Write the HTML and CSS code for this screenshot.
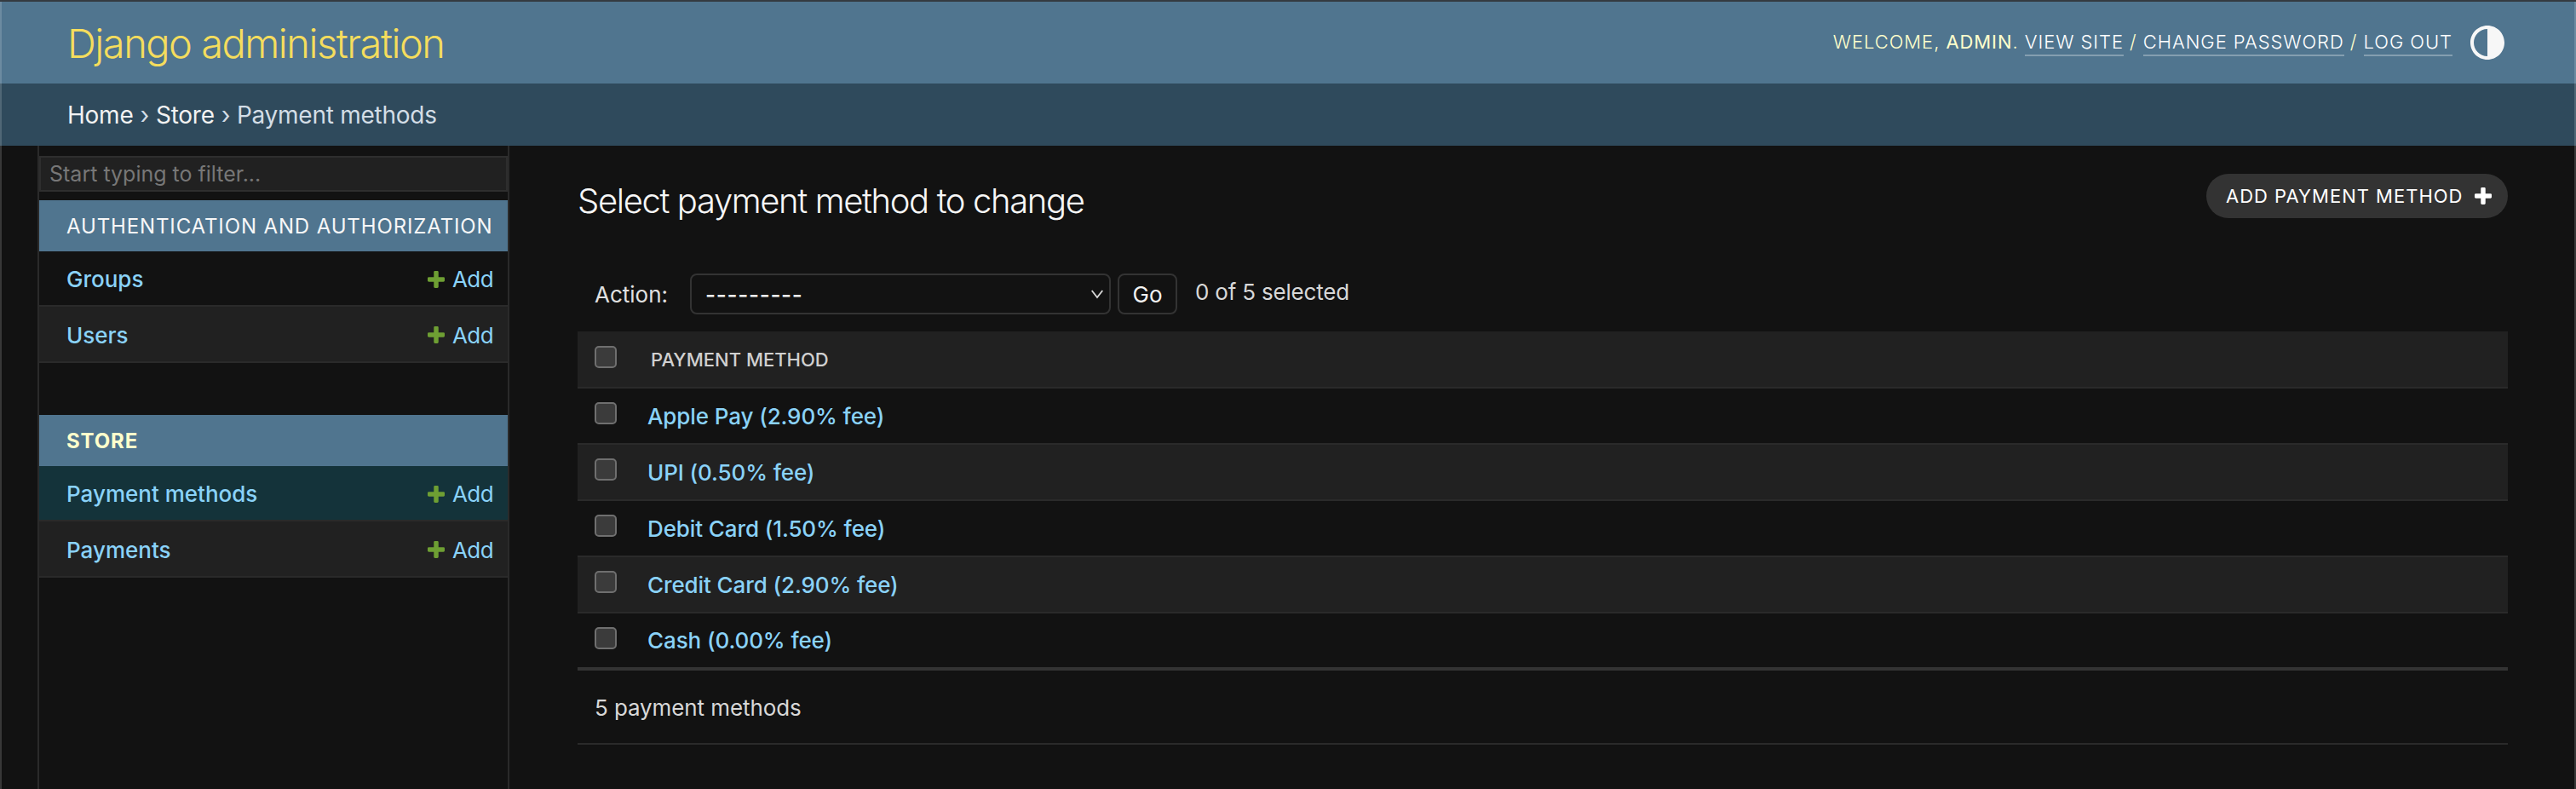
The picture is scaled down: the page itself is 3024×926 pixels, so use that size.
FILE: index.html
```html
<!DOCTYPE html>
<html lang="en">
<head>
    <meta charset="UTF-8">
    <title>Select payment method to change | Django site admin</title>
    <link rel="stylesheet" href="styles.css">
</head>
<body>
    <div id="header" class="edged">
        <h1 id="site-name">Django administration</h1>
        <div id="user-tools">
            <div class="user-links">
                <span class="welcome">Welcome, <strong>admin</strong>.</span>
                <a href="#">View site</a> /
                <a href="#">Change password</a> /
                <a href="#">Log out</a>
            </div>
            <svg class="theme-icon" viewBox="0 0 24 24"><path d="M12 22C6.477 22 2 17.523 2 12S6.477 2 12 2s10 4.477 10 10-4.477 10-10 10zm0-2V4a8 8 0 1 0 0 16z"/></svg>
        </div>
    </div>
    <div class="breadcrumbs edged"><a href="#">Home</a> › <a href="#">Store</a> › Payment methods</div>

    <div id="main" class="edged">
        <div class="sidebar-toggle"></div>
        <div id="nav-sidebar">
            <input type="text" id="nav-filter" placeholder="Start typing to filter...">

            <div class="app-module">
                <div class="caption">Authentication and Authorization</div>
                <div class="nav-row"><a href="#">Groups</a><a class="addlink" href="#"><svg class="plus" viewBox="192 192 1408 1408"><path d="M1600 796v192q0 40-28 68t-68 28h-416v416q0 40-28 68t-68 28h-192q-40 0-68-28t-28-68v-416h-416q-40 0-68-28t-28-68v-192q0-40 28-68t68-28h416v-416q0-40 28-68t68-28h192q40 0 68 28t28 68v416h416q40 0 68 28t28 68z"/></svg>Add</a></div>
                <div class="nav-row alt"><a href="#">Users</a><a class="addlink" href="#"><svg class="plus" viewBox="192 192 1408 1408"><path d="M1600 796v192q0 40-28 68t-68 28h-416v416q0 40-28 68t-68 28h-192q-40 0-68-28t-28-68v-416h-416q-40 0-68-28t-28-68v-192q0-40 28-68t68-28h416v-416q0-40 28-68t68-28h192q40 0 68 28t28 68v416h416q40 0 68 28t28 68z"/></svg>Add</a></div>
            </div>

            <div class="app-module">
                <div class="caption current-app">Store</div>
                <div class="nav-row current"><a href="#">Payment methods</a><a class="addlink" href="#"><svg class="plus" viewBox="192 192 1408 1408"><path d="M1600 796v192q0 40-28 68t-68 28h-416v416q0 40-28 68t-68 28h-192q-40 0-68-28t-28-68v-416h-416q-40 0-68-28t-28-68v-192q0-40 28-68t68-28h416v-416q0-40 28-68t68-28h192q40 0 68 28t28 68v416h416q40 0 68 28t28 68z"/></svg>Add</a></div>
                <div class="nav-row alt"><a href="#">Payments</a><a class="addlink" href="#"><svg class="plus" viewBox="192 192 1408 1408"><path d="M1600 796v192q0 40-28 68t-68 28h-416v416q0 40-28 68t-68 28h-192q-40 0-68-28t-28-68v-416h-416q-40 0-68-28t-28-68v-192q0-40 28-68t68-28h416v-416q0-40 28-68t68-28h192q40 0 68 28t28 68v416h416q40 0 68 28t28 68z"/></svg>Add</a></div>
            </div>
        </div>

        <div id="content">
            <div class="title-row">
                <h2>Select payment method to change</h2>
                <a class="add-button" href="#">Add payment method<svg class="plus-white" viewBox="192 192 1408 1408"><path d="M1600 796v192q0 40-28 68t-68 28h-416v416q0 40-28 68t-68 28h-192q-40 0-68-28t-28-68v-416h-416q-40 0-68-28t-28-68v-192q0-40 28-68t68-28h416v-416q0-40 28-68t68-28h192q40 0 68 28t28 68v416h416q40 0 68 28t28 68z"/></svg></a>
            </div>

            <div class="actions">
                <label for="action">Action:</label>
                <div class="select-box" id="action">
                    <span class="select-value">---------</span>
                    <svg class="chevron" viewBox="0 0 14 10"><path d="M1.5 1.5 7 8.5l5.5-7"/></svg>
                </div>
                <button class="go-button" type="button">Go</button>
                <span class="counter">0 of 5 selected</span>
            </div>

            <table id="result-list">
                <thead>
                    <tr>
                        <th class="check-col"><span class="checkbox"></span></th>
                        <th class="name-head">Payment method</th>
                    </tr>
                </thead>
                <tbody>
                    <tr><td class="check-col"><span class="checkbox"></span></td><td><a href="#">Apple Pay (2.90% fee)</a></td></tr>
                    <tr class="alt"><td class="check-col"><span class="checkbox"></span></td><td><a href="#">UPI (0.50% fee)</a></td></tr>
                    <tr><td class="check-col"><span class="checkbox"></span></td><td><a href="#">Debit Card (1.50% fee)</a></td></tr>
                    <tr class="alt"><td class="check-col"><span class="checkbox"></span></td><td><a href="#">Credit Card (2.90% fee)</a></td></tr>
                    <tr><td class="check-col"><span class="checkbox"></span></td><td><a href="#">Cash (0.00% fee)</a></td></tr>
                </tbody>
            </table>

            <p class="paginator">5 payment methods</p>
        </div>
    </div>
</body>
</html>
```

FILE: styles.css
```css
html, body {
    height: 100%;
}

body {
    margin: 0;
    box-sizing: border-box;
    display: flex;
    flex-direction: column;
    border-top: 2px solid #343a40;
    background-color: #121212;
    color: #eeeeee;
    font-family: Inter, "Noto Sans", sans-serif;
    font-size: 26px;
    overflow: hidden;
}

a {
    color: #8ad2f8;
    text-decoration: none;
}

/* Thin window edge down both sides, shows through on each band */
.edged {
    border-left: 2px solid rgba(255, 255, 255, 0.16);
    border-right: 2px solid rgba(255, 255, 255, 0.16);
}

/* Header */
#header {
    display: flex;
    align-items: center;
    justify-content: space-between;
    flex: none;
    height: 96px;
    padding: 0 78px 0 77px;
    background-color: #50758f;
    color: #ffffcc;
}

#site-name {
    margin: 0;
    color: #f5dd5d;
    font-size: 47px;
    font-weight: 300;
    letter-spacing: -1.5px;
}

#user-tools {
    display: flex;
    align-items: center;
    font-size: 22px;
    font-weight: 300;
    letter-spacing: 0.93px;
    text-transform: uppercase;
}

.user-links {
    margin-top: -2px;
}

#user-tools strong {
    font-weight: 400;
}

#user-tools a {
    padding-bottom: 2px;
    color: #ffffff;
    border-bottom: 2px solid rgba(255, 255, 255, 0.3);
}

.theme-icon {
    width: 48px;
    height: 48px;
    margin-left: 17px;
    fill: #f7f7f7;
}

.breadcrumbs {
    display: flex;
    align-items: center;
    flex: none;
    gap: 8px;
    height: 73px;
    padding-left: 77px;
    background-color: #2f4a5c;
    color: #d3dde6;
    font-size: 28px;
    letter-spacing: -0.25px;
}

.breadcrumbs a {
    color: #f2f2f2;
}

/* Sidebar */
#main {
    display: flex;
    flex: 1;
}

.sidebar-toggle {
    flex: none;
    width: 42px;
    border-right: 2px solid #2a2a2a;
}

#nav-sidebar {
    flex: none;
    width: 550px;
    padding-top: 12px;
    border-right: 2px solid #2a2a2a;
}

#nav-filter {
    display: block;
    box-sizing: border-box;
    width: 100%;
    height: 42px;
    margin: 0 0 10px;
    padding: 0 10px;
    border: 2px solid #2e2e2e;
    background-color: #212121;
    color: #eeeeee;
    font-family: inherit;
    font-size: 25px;
}

#nav-filter::placeholder {
    color: #777777;
}

.app-module {
    margin-bottom: 61px;
}

.caption {
    display: flex;
    align-items: center;
    height: 60px;
    padding-left: 32px;
    background-color: #50758f;
    color: #f7f7f7;
    font-size: 24px;
    font-weight: 400;
    letter-spacing: 0.87px;
    text-transform: uppercase;
    white-space: nowrap;
}

.current-app {
    color: #ffffcc;
    font-weight: 700;
}

.nav-row {
    display: flex;
    align-items: center;
    justify-content: space-between;
    box-sizing: border-box;
    height: 65px;
    padding: 2px 17px 0 32px;
    border-bottom: 2px solid #2a2a2a;
    font-size: 26px;
    font-weight: 500;
}

.nav-row.alt {
    height: 66px;
    background-color: #212121;
}

.nav-row.current {
    background-color: #14333a;
}

.addlink {
    display: flex;
    align-items: center;
    font-weight: 400;
    letter-spacing: -0.6px;
}

.plus {
    width: 20px;
    height: 20px;
    margin-right: 9px;
    fill: #6e9f33;
}

/* Content */
#content {
    flex: 1;
    padding: 0 78px 0 80px;
}

.title-row {
    display: flex;
    align-items: flex-start;
    justify-content: space-between;
    height: 150px;
}

.title-row h2 {
    margin: 41px 0 0;
    color: #f7f7f7;
    font-size: 40px;
    font-weight: 300;
    letter-spacing: -1.38px;
    line-height: 48px;
}

.add-button {
    display: flex;
    align-items: center;
    box-sizing: border-box;
    width: 354px;
    height: 52px;
    margin-top: 33px;
    padding: 0 14px 0 23px;
    border-radius: 26px;
    background-color: #333333;
    color: #ffffff;
    font-size: 22px;
    font-weight: 400;
    letter-spacing: 1px;
    text-transform: uppercase;
    white-space: nowrap;
}

.plus-white {
    width: 20px;
    height: 20px;
    margin-left: 14px;
    fill: #ffffff;
}

.actions {
    display: flex;
    align-items: center;
    height: 48px;
    padding-left: 20px;
    font-size: 26px;
    color: #e0e0e0;
}

.select-box {
    display: flex;
    align-items: center;
    justify-content: space-between;
    box-sizing: border-box;
    width: 494px;
    height: 48px;
    margin-left: 26px;
    padding: 0 6px 0 16px;
    border: 2px solid #333333;
    border-radius: 8px;
    color: #f0f0f0;
}

.select-value {
    font-weight: 500;
    letter-spacing: 0.7px;
}

.chevron {
    width: 16px;
    height: 12px;
    fill: none;
    stroke: #d8d8d8;
    stroke-width: 1.6;
}

.go-button {
    box-sizing: border-box;
    width: 70px;
    height: 48px;
    margin-left: 8px;
    border: 2px solid #333333;
    border-radius: 8px;
    background-color: #121212;
    color: #f2f2f2;
    font-family: inherit;
    font-size: 26px;
}

.counter {
    margin: -6px 0 0 21px;
    color: #d8d8d8;
    letter-spacing: -0.2px;
}

#result-list {
    width: 100%;
    margin-top: 20px;
    border-collapse: collapse;
    border-bottom: 4px solid #333333;
}

#result-list th,
#result-list td {
    box-sizing: border-box;
    height: 66px;
    padding: 0;
    border-bottom: 2px solid #2a2a2a;
    text-align: left;
}

#result-list thead tr,
#result-list tr.alt {
    background-color: #212121;
}

#result-list tbody tr:last-child td {
    border-bottom: 0;
}

#result-list .check-col {
    width: 82px;
    padding-left: 20px;
}

.checkbox {
    display: block;
    box-sizing: border-box;
    width: 26px;
    height: 26px;
    margin-top: -6px;
    border: 2px solid #6f6f6f;
    border-radius: 5px;
    background-color: #3b3b3b;
}

#result-list td a {
    font-weight: 500;
    letter-spacing: -0.1px;
}

#result-list .name-head {
    padding-left: 4px;
    color: #d0d0d0;
    font-size: 22px;
    font-weight: 500;
    text-transform: uppercase;
}

.paginator {
    display: flex;
    align-items: center;
    box-sizing: border-box;
    height: 87px;
    margin: 0;
    padding: 2px 0 0 20px;
    border-bottom: 2px solid #2a2a2a;
    color: #d8d8d8;
    font-size: 26px;
    letter-spacing: -0.1px;
}
```
